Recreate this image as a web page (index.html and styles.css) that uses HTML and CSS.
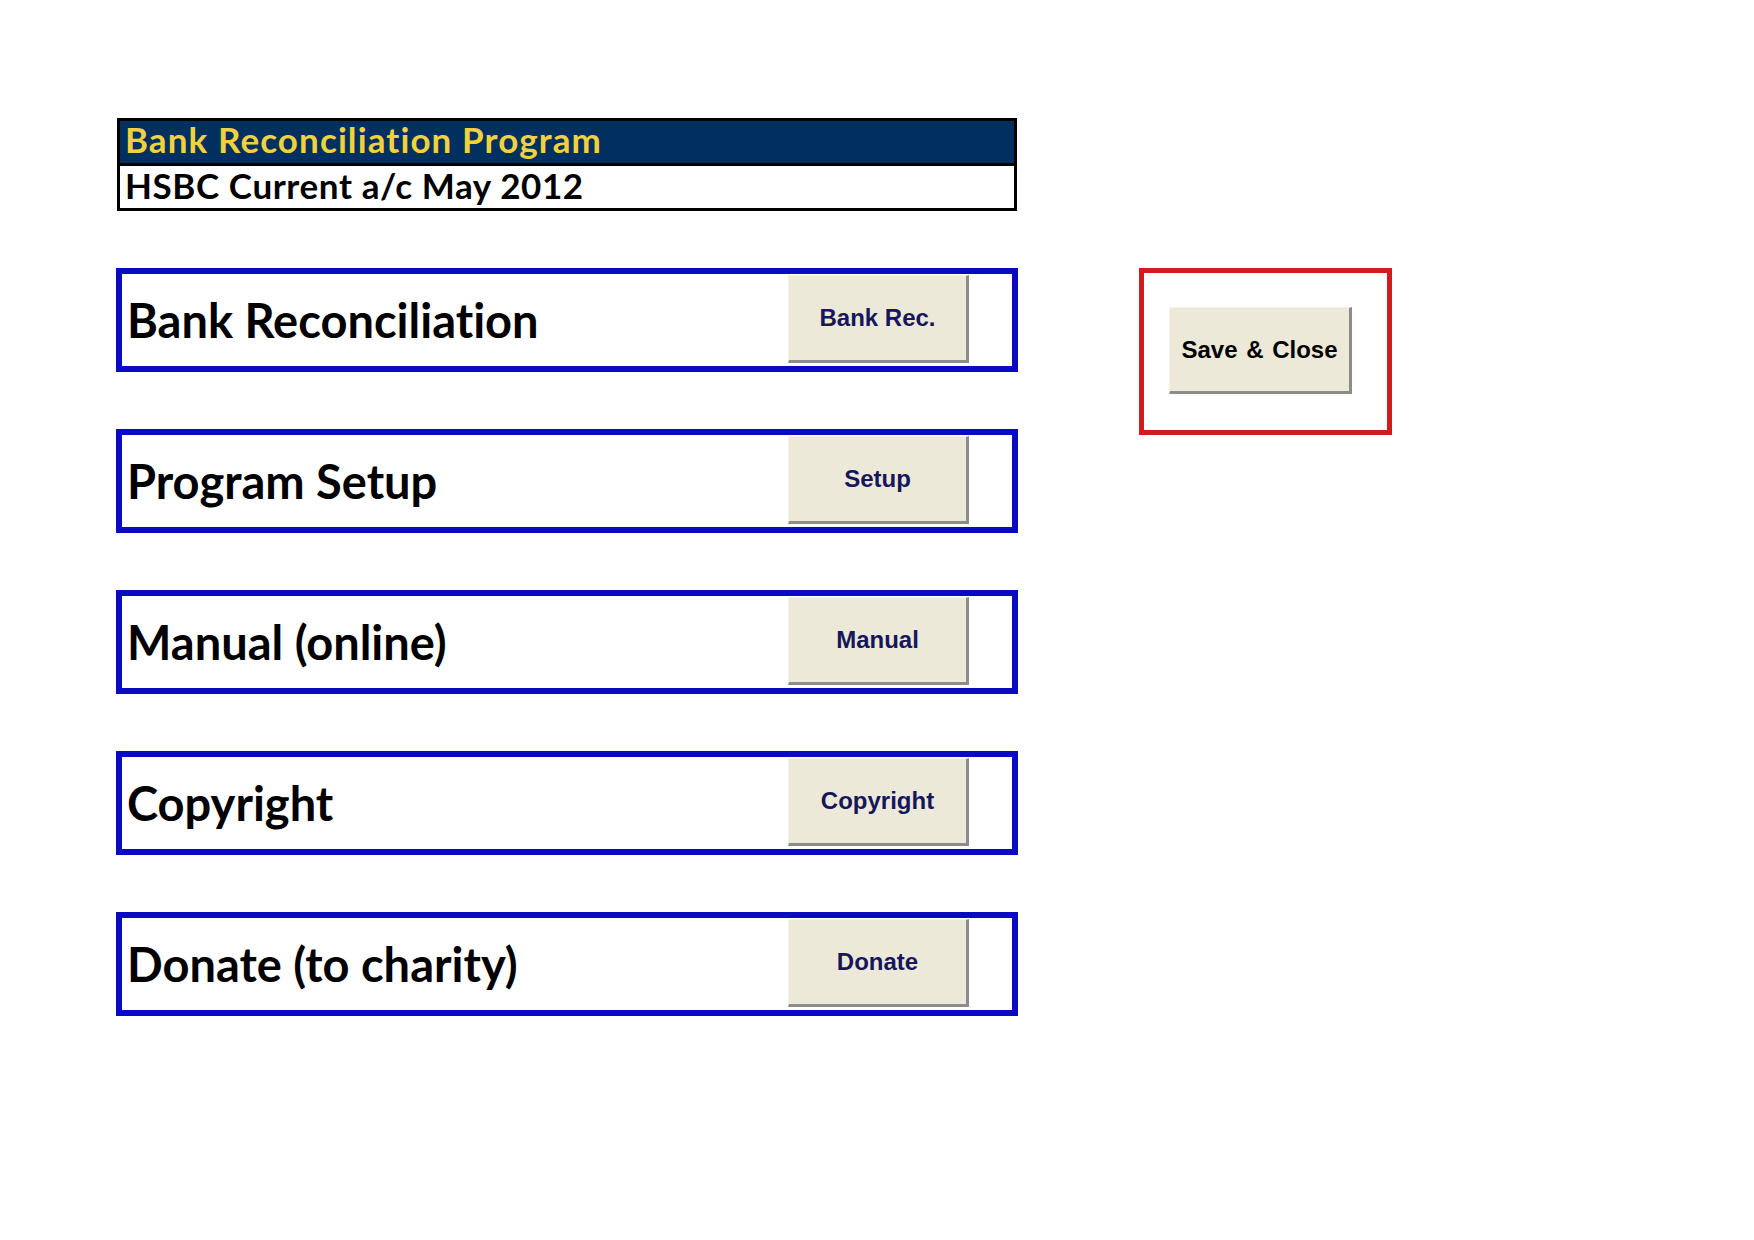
FILE: index.html
```html
<!DOCTYPE html>
<html lang="en">
<head>
<meta charset="utf-8">
<title>Bank Reconciliation Program</title>
<link rel="stylesheet" href="styles.css">
</head>
<body>
<div class="page">
  <div class="main">
    <div class="header">
      <div class="header-title">Bank Reconciliation Program</div>
      <div class="header-sub">HSBC Current a/c May 2012</div>
    </div>
    <div class="menu-row">
      <span class="menu-label">Bank Reconciliation</span>
      <button class="xp-btn">Bank Rec.</button>
    </div>
    <div class="menu-row">
      <span class="menu-label">Program Setup</span>
      <button class="xp-btn">Setup</button>
    </div>
    <div class="menu-row">
      <span class="menu-label">Manual (online)</span>
      <button class="xp-btn">Manual</button>
    </div>
    <div class="menu-row">
      <span class="menu-label">Copyright</span>
      <button class="xp-btn">Copyright</button>
    </div>
    <div class="menu-row">
      <span class="menu-label">Donate (to charity)</span>
      <button class="xp-btn">Donate</button>
    </div>
  </div>
  <div class="side">
    <div class="close-box">
      <button class="xp-btn close-btn">Save &amp; Close</button>
    </div>
  </div>
</div>
</body>
</html>
```
FILE: styles.css
```css
html, body {
  margin: 0;
  padding: 0;
  background: #ffffff;
}

.page {
  display: flex;
  align-items: flex-start;
  padding: 118px 0 0 116px;
}

.main {
  width: 902px;
  display: flex;
  flex-direction: column;
  gap: 57px;
}

.header {
  margin-left: 1px;
  width: 894px;
  border: 3px solid #000000;
  font-family: "Lato", "Liberation Sans", sans-serif;
  font-weight: bold;
  font-size: 35px;
  font-variant-ligatures: none;
}

.header-title {
  background: #00305f;
  color: #f2d23c;
  height: 42px;
  line-height: 37px;
  padding-left: 5px;
  letter-spacing: 1.1px;
  border-bottom: 3px solid #000000;
}

.header-sub {
  background: #ffffff;
  color: #000000;
  height: 42px;
  line-height: 39px;
  padding-left: 5px;
  letter-spacing: 0.6px;
}

.menu-row {
  height: 92px;
  border: 6px solid #0a0ac4;
  display: flex;
  align-items: flex-start;
  justify-content: space-between;
  background: #ffffff;
}

.menu-label {
  align-self: center;
  padding-left: 5px;
  font-family: "Lato", "Liberation Sans", sans-serif;
  font-weight: bold;
  font-size: 47px;
  color: #000000;
  line-height: 1;
  font-variant-ligatures: none;
}

.xp-btn {
  margin: 1px 43px 0 0;
  width: 181px;
  height: 88px;
  padding: 0;
  background: #ece9d8;
  border: none;
  border-right: 3px solid #8c8c88;
  border-bottom: 3px solid #8c8c88;
  border-left: 1px solid #f4f2e8;
  border-top: 1px solid #f4f2e8;
  font-family: "Liberation Sans", Arial, sans-serif;
  font-weight: bold;
  font-size: 24px;
  color: #16165c;
  text-align: center;
}

.side {
  margin-left: 121px;
  padding-top: 150px;
}

.close-box {
  width: 253px;
  height: 167px;
  border: 5px solid #d01c1c;
  padding: 34px 0 0 25px;
  box-sizing: border-box;
}

.close-btn {
  margin: 0;
  width: 183px;
  height: 87px;
  color: #000000;
  word-spacing: 2px;
}
```
